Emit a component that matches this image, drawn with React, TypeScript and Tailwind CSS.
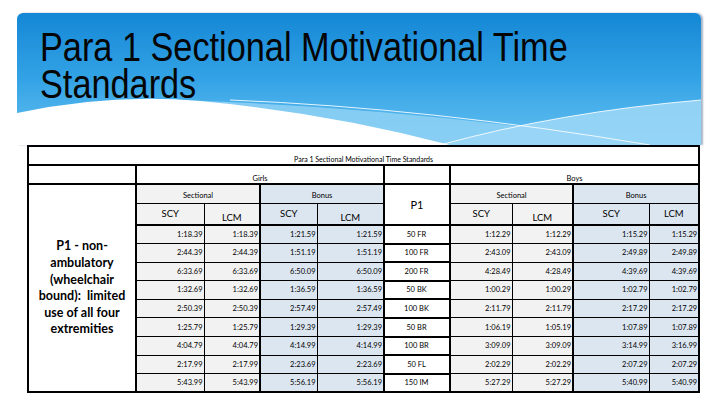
const rows: string[][] = [
  ['1:18.39', '1:18.39', '1:21.59', '1:21.59', '50 FR', '1:12.29', '1:12.29', '1:15.29', '1:15.29'],
  ['2:44.39', '2:44.39', '1:51.19', '1:51.19', '100 FR', '2:43.09', '2:43.09', '2:49.89', '2:49.89'],
  ['6:33.69', '6:33.69', '6:50.09', '6:50.09', '200 FR', '4:28.49', '4:28.49', '4:39.69', '4:39.69'],
  ['1:32.69', '1:32.69', '1:36.59', '1:36.59', '50 BK', '1:00.29', '1:00.29', '1:02.79', '1:02.79'],
  ['2:50.39', '2:50.39', '2:57.49', '2:57.49', '100 BK', '2:11.79', '2:11.79', '2:17.29', '2:17.29'],
  ['1:25.79', '1:25.79', '1:29.39', '1:29.39', '50 BR', '1:06.19', '1:05.19', '1:07.89', '1:07.89'],
  ['4:04.79', '4:04.79', '4:14.99', '4:14.99', '100 BR', '3:09.09', '3:09.09', '3:14.99', '3:16.99'],
  ['2:17.99', '2:17.99', '2:23.69', '2:23.69', '50 FL', '2:02.29', '2:02.29', '2:07.29', '2:07.29'],
  ['5:43.99', '5:43.99', '5:56.19', '5:56.19', '150 IM', '5:27.29', '5:27.29', '5:40.99', '5:40.99'],
];

// per-column cell styling for the data rows
const cellCls = [
  'bg-[#f2f2f2] border border-black text-right',
  'bg-[#f2f2f2] border border-black border-r-2 text-right',
  'bg-[#dce6f1] border border-black border-l-2 text-right',
  'bg-[#dce6f1] border border-black text-right',
  'bg-white border-2 border-black text-center',
  'bg-[#f2f2f2] border border-black text-right',
  'bg-[#f2f2f2] border border-black text-right',
  'bg-[#dce6f1] border border-black border-l-2 text-right',
  'bg-[#dce6f1] border border-black border-r-2 text-right',
];

function Banner() {
  return (
    <div className="relative ml-[17px] mt-[13px] h-[132px] w-[684px] overflow-hidden rounded-t-[6px] bg-linear-to-b from-[#1387d5] via-[#33a3e6] to-[#62c0f0] pl-[23px] pt-[16px] shadow-[2px_0_2px_rgba(0,40,90,0.35)]">
      <svg
        className="absolute left-0 top-0"
        width="684"
        height="132"
        viewBox="17 13 684 132"
      >
        <path d="M180 100 Q420 108 650 145 L17 145 Z" fill="#8fd1f5" opacity="0.85" />
        <path d="M440 145 Q560 112 701 100 L701 145 Z" fill="#9ad6f6" opacity="0.9" />
        <path d="M17 113 Q110 93 200 101 Q330 113 450 145 L17 145 Z" fill="#ffffff" />
        <path d="M230 100 Q430 108 650 145" fill="none" stroke="#ffffff" strokeWidth="1" opacity="0.85" />
        <path d="M440 145 Q560 112 701 100" fill="none" stroke="#ffffff" strokeWidth="1" opacity="0.85" />
      </svg>
      {/* no narrow face installed, so squeeze Liberation Sans to Arial Narrow widths */}
      <h1 className="relative w-[760px] origin-top-left scale-x-[0.836] whitespace-nowrap font-['Liberation_Sans',sans-serif] text-[41px] leading-[37px] text-[#050505]">
        <div>Para 1 Sectional Motivational Time</div>
        <div>Standards</div>
      </h1>
    </div>
  );
}

export default function App() {
  return (
    <div className="h-[405px] w-[720px] overflow-hidden bg-white font-['Lato','Liberation_Sans',sans-serif] text-black">
      <Banner />
      <table className="ml-[27px] w-[671px] table-fixed border-collapse border-2 border-black">
        <colgroup>
          <col className="w-[108px]" />
          <col className="w-[68px]" />
          <col className="w-[56px]" />
          <col className="w-[57px]" />
          <col className="w-[67px]" />
          <col className="w-[66px]" />
          <col className="w-[62px]" />
          <col className="w-[61px]" />
          <col className="w-[76px]" />
          <col className="w-[50px]" />
        </colgroup>
        <tbody>
          <tr className="h-[19px]">
            <td colSpan={10} className="border-b-2 border-black p-0 pb-[1px] text-center align-bottom text-[7px] leading-none">
              Para 1 Sectional Motivational Time Standards
            </td>
          </tr>
          <tr className="h-[19px]">
            <td className="border-2 border-black p-0" />
            <td colSpan={4} className="border-2 border-black p-0 pb-[1px] text-center align-bottom text-[7.5px] leading-none">
              Girls
            </td>
            <td className="border-2 border-black p-0" />
            <td colSpan={4} className="border-2 border-black p-0 pb-[1px] text-center align-bottom text-[7.5px] leading-none">
              Boys
            </td>
          </tr>
          <tr className="h-[19px]">
            <td rowSpan={11} className="border-2 border-black px-1 text-center align-middle text-[12.5px] font-bold leading-[16.6px]">
              P1 - non-
              <br />
              ambulatory
              <br />
              (wheelchair
              <br />
              bound):&nbsp; limited
              <br />
              use of all four
              <br />
              extremities
            </td>
            <td colSpan={2} className="border border-black border-r-2 bg-[#f2f2f2] p-0 pt-[3px] text-center text-[7.5px] leading-none">
              Sectional
            </td>
            <td colSpan={2} className="border border-black border-r-2 bg-[#dce6f1] p-0 pt-[3px] text-center text-[7.5px] leading-none">
              Bonus
            </td>
            <td rowSpan={2} className="border-2 border-black bg-white p-0 text-center align-middle text-[11px] leading-none">
              P1
            </td>
            <td colSpan={2} className="border border-black border-r-2 bg-[#f2f2f2] p-0 pt-[3px] text-center text-[7.5px] leading-none">
              Sectional
            </td>
            <td colSpan={2} className="border border-black border-r-2 bg-[#dce6f1] p-0 pt-[3px] text-center text-[7.5px] leading-none">
              Bonus
            </td>
          </tr>
          <tr className="h-[22px]">
            <td className="border border-black border-b-2 bg-[#f2f2f2] p-0 text-center align-middle text-[9.5px] leading-none">SCY</td>
            <td className="border border-black border-b-2 border-r-2 bg-[#f2f2f2] p-0 pb-[2px] text-center align-bottom text-[9.5px] leading-none">LCM</td>
            <td className="border border-black border-b-2 border-l-2 bg-[#dce6f1] p-0 text-center align-middle text-[9.5px] leading-none">SCY</td>
            <td className="border border-black border-b-2 border-r-2 bg-[#dce6f1] p-0 pb-[2px] text-center align-bottom text-[9.5px] leading-none">LCM</td>
            <td className="border border-black border-b-2 bg-[#f2f2f2] p-0 text-center align-middle text-[9.5px] leading-none">SCY</td>
            <td className="border border-black border-b-2 bg-[#f2f2f2] p-0 pb-[2px] text-center align-bottom text-[9.5px] leading-none">LCM</td>
            <td className="border border-black border-b-2 border-l-2 bg-[#dce6f1] p-0 text-center align-middle text-[9.5px] leading-none">SCY</td>
            <td className="border border-black border-b-2 border-r-2 bg-[#dce6f1] p-0 text-center align-middle text-[9.5px] leading-none">LCM</td>
          </tr>
          {rows.map((r) => (
            <tr key={r[4]} className="h-[18.6px]">
              {r.map((v, i) => (
                <td key={i} className={`${cellCls[i]} p-0 pr-[1px] align-middle text-[7.5px] leading-none`}>
                  {v}
                </td>
              ))}
            </tr>
          ))}
        </tbody>
      </table>
    </div>
  );
}
